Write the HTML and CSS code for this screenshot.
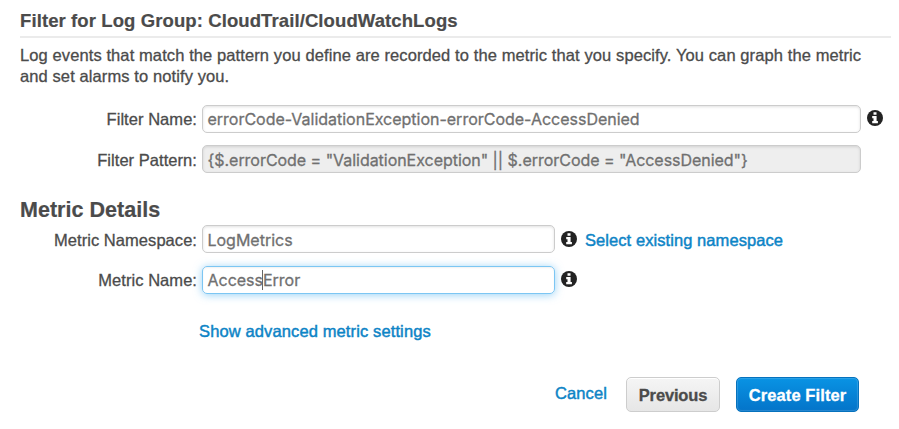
FILE: index.html
```
<!DOCTYPE html>
<html lang="en">
<head>
<meta charset="utf-8">
<title>Create Metric Filter</title>
<link rel="stylesheet" href="styles.css">
</head>
<body>
<svg class="defs" aria-hidden="true">
  <symbol id="info" viewBox="0 0 16 16">
    <circle cx="8" cy="8" r="8" fill="#222"/>
    <path d="M6.5 2.2h3v2.6h-3zM5.2 6h4.4v5h1.3v2.2H5.2V11h1.3V8.2H5.2z" fill="#fff"/>
  </symbol>
</svg>
<main class="panel">
  <h1 class="title">Filter for Log Group: CloudTrail/CloudWatchLogs</h1>
  <p class="intro">Log events that match the pattern you define are recorded to the metric that you specify. You can graph the metric<br>and set alarms to notify you.</p>
  <section class="fields">
    <div class="row">
      <span class="label">Filter Name:</span>
      <div class="input wide">errorCode-ValidationException-errorCode-AccessDenied</div>
      <svg class="info"><use href="#info"/></svg>
    </div>
    <div class="row">
      <span class="label low">Filter Pattern:</span>
      <div class="input wide disabled">{$.errorCode = "ValidationException" || $.errorCode = "AccessDenied"}</div>
    </div>
  </section>
  <h2 class="subtitle">Metric Details</h2>
  <section class="fields metric">
    <div class="row">
      <span class="label low">Metric Namespace:</span>
      <div class="input low">LogMetrics</div>
      <svg class="info low"><use href="#info"/></svg>
      <a class="link">Select existing namespace</a>
    </div>
    <div class="row">
      <span class="label">Metric Name:</span>
      <div class="input focused">Access<span class="caret"></span>Error</div>
      <svg class="info"><use href="#info"/></svg>
    </div>
  </section>
  <a class="link advanced">Show advanced metric settings</a>
  <footer class="actions">
    <a class="link cancel">Cancel</a>
    <span class="button">Previous</span>
    <span class="button primary">Create Filter</span>
  </footer>
</main>
</body>
</html>
```
FILE: styles.css
```
* { box-sizing: border-box; }
body {
  margin: 0;
  background: #fff;
  color: #4b4b4b;
  font: 16.5px/21.3px "Liberation Sans", Arial, sans-serif;
  letter-spacing: .1px;
  -webkit-text-stroke: .3px;
}
.defs { display: none; }
.panel { padding: 9px 8px 0 20px; }
.title {
  height: 29px;
  margin: 0;
  border-bottom: 2px solid #ebebeb;
  font-size: 18.5px;
  line-height: 23px;
  letter-spacing: .1px;
  -webkit-text-stroke: .2px;
}
.intro { margin: 7px 0 0; white-space: nowrap; }
.fields { display: grid; gap: 12px; margin-top: 17.4px; }
.row { display: flex; height: 28px; }
.label {
  width: 177px;
  margin-right: 4.5px;
  line-height: 29px;
  letter-spacing: .05px;
  text-align: right;
}
.label.low { line-height: 30px; }
.input {
  display: flex;
  width: 353.5px;
  padding-left: 5px;
  border: 1px solid #ccc;
  border-radius: 5px;
  box-shadow: inset 0 1px 3px rgba(0, 0, 0, .12);
  color: #707070;
  font: 16px/27px Inter, sans-serif;
  letter-spacing: -.01px;
  white-space: pre;
}
.input.low { line-height: 28.5px; }
.wide { width: 659.5px; }
.disabled { background: #eee; line-height: 28.5px; letter-spacing: -.035px; }
.focused {
  border: 1.5px solid #7cc6f3;
  box-shadow: 0 1px 9px rgba(82, 178, 240, .6), inset 0 1px 2px rgba(0, 0, 0, .06);
}
.caret { width: 1px; height: 20px; margin: 3px 0 0 -1px; background: #666; }
.info { width: 16px; height: 16px; margin: 5px 0 0 6px; }
.info.low { margin-top: 6px; }
.subtitle {
  margin: 24px 0 0;
  font-size: 21.5px;
  line-height: 26px;
  letter-spacing: .03px;
  -webkit-text-stroke: .2px;
}
.metric { gap: 13px; margin-top: 2px; }
.link {
  color: #0d84c6;
  letter-spacing: .12px;
  -webkit-text-stroke: .45px;
}
.row .link { margin-left: 8px; line-height: 30px; letter-spacing: .07px; }
.advanced { display: block; margin: 27px 0 0 179px; }
.actions {
  display: flex;
  align-items: flex-start;
  justify-content: flex-end;
  margin: 35px 32px 0 0;
}
.cancel { margin: 6px 19px 0 0; }
.button {
  width: 94px;
  height: 35px;
  margin-right: 16px;
  border: 1px solid #cdcdcd;
  border-radius: 5px;
  background: linear-gradient(#f5f5f5, #e6e6e6);
  box-shadow: inset 0 1px #fff;
  font-weight: bold;
  letter-spacing: -.15px;
  line-height: 34px;
  text-align: center;
}
.primary {
  width: 123px;
  margin-right: 0;
  border-color: #0672bd;
  background: linear-gradient(#0993e4, #0474c9);
  box-shadow: inset 0 0 1px 1px rgba(255, 255, 255, .15);
  color: #fff;
  letter-spacing: .1px;
}
```
